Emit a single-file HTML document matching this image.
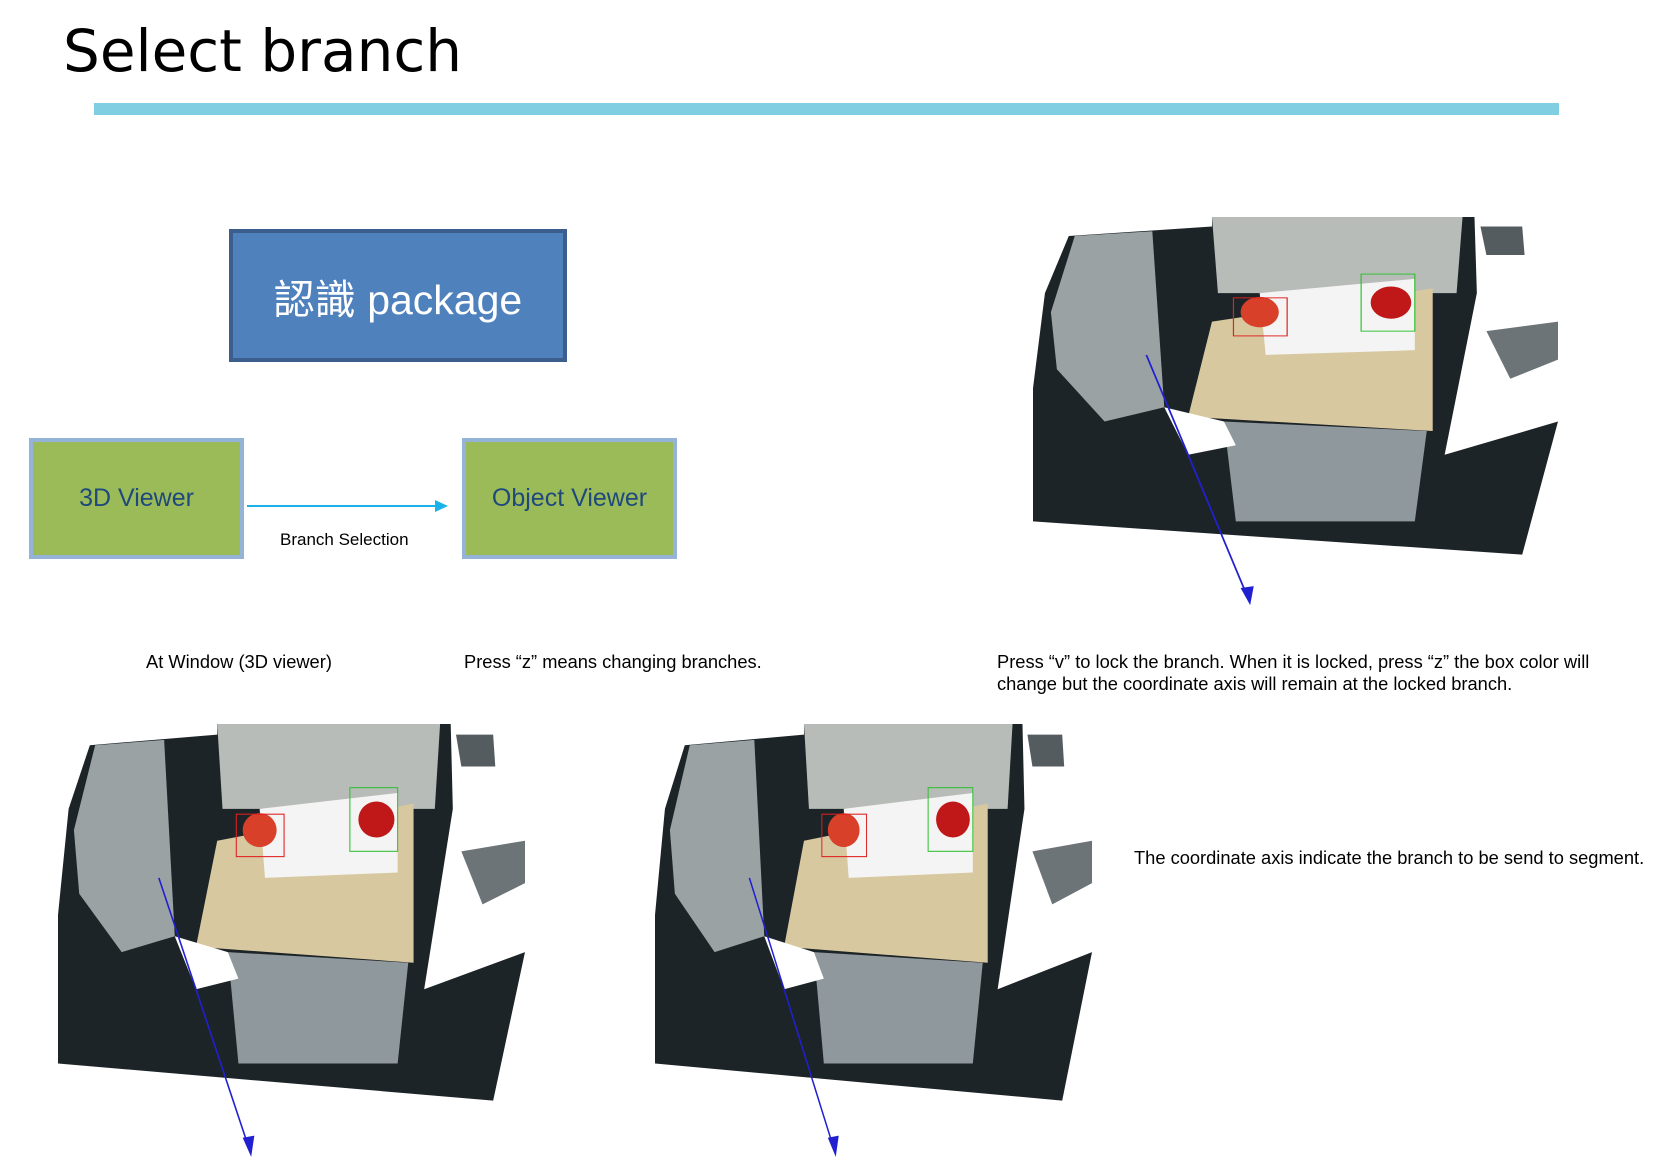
<!DOCTYPE html>
<html><head><meta charset="utf-8"><style>
html,body{margin:0;padding:0;background:#fff}
body{width:1654px;height:1162px;position:relative;overflow:hidden;font-family:"Liberation Sans","Noto Sans CJK TC",sans-serif}
.a{position:absolute}
.t{font-size:18.3px;color:#000;white-space:nowrap;line-height:22px}
</style></head><body>
<div class="a" style="left:63px;top:16px;font-family:'DejaVu Sans',sans-serif;font-size:58px;line-height:70px;color:#000">Select branch</div>
<div class="a" style="left:94px;top:103px;width:1465px;height:12px;background:#7fcee1"></div>

<div class="a" style="left:229px;top:229px;width:330px;height:125px;background:#4f81bd;border:4px solid #3b5e8c;display:flex;align-items:center;justify-content:center;color:#fff;font-size:41px">認識 package</div>

<div class="a" style="left:29px;top:438px;width:207px;height:113px;background:#9bbb59;border:4px solid #95b3d7;display:flex;align-items:center;justify-content:center;color:#1f497d;font-size:25px">3D Viewer</div>
<div class="a" style="left:462px;top:438px;width:207px;height:113px;background:#9bbb59;border:4px solid #95b3d7;display:flex;align-items:center;justify-content:center;color:#1f497d;font-size:25px">Object Viewer</div>
<svg class="a" style="left:245px;top:496px" width="205" height="20"><line x1="2" y1="10" x2="192" y2="10" stroke="#19b3ea" stroke-width="2"/><polygon points="190,4 203,10 190,16" fill="#19b3ea"/></svg>
<div class="a t" style="left:280px;top:529px;font-size:17px">Branch Selection</div>

<div class="a t" style="left:146px;top:651px">At Window (3D viewer)</div>
<div class="a t" style="left:464px;top:651px">Press “z” means changing branches.</div>
<div class="a t" style="left:997px;top:651px">Press “v” to lock the branch. When it is locked, press “z” the box color will<br>change but the coordinate axis will remain at the locked branch.</div>
<div class="a t" style="left:1134px;top:847px">The coordinate axis indicate the branch to be send to segment.</div>

<svg class="a" style="left:1033px;top:217px" width="525" height="390" viewBox="0 0 440 410" preserveAspectRatio="none">
<g id="s">
<polygon points="10,80 30,20 150,10 150,0 370,0 372,80 345,250 440,215 410,355 0,320 0,180" fill="#1d2428"/>
<polygon points="15,100 35,20 100,15 110,200 60,215 20,160" fill="#9aa2a4"/>
<polygon points="150,0 360,0 355,80 155,80" fill="#b8bcb8"/>
<polygon points="375,10 410,10 412,40 380,40" fill="#555c60"/>
<polygon points="380,120 440,110 440,150 400,170" fill="#6c7478"/>
<polygon points="150,110 335,75 335,225 130,210" fill="#d8c8a0"/>
<polygon points="190,80 320,65 320,140 195,145" fill="#f4f4f4"/>
<polygon points="160,215 330,225 320,320 170,320" fill="#8f989c"/>
<polygon points="110,200 160,215 170,240 130,250" fill="#fff"/>
<circle cx="190" cy="100" r="16" fill="#d8402a"/>
<circle cx="300" cy="90" r="17" fill="#c01818"/>
<rect x="168" y="85" width="45" height="40" fill="none" stroke="#e02020"/>
<rect x="275" y="60" width="45" height="60" fill="none" stroke="#30c030"/>
<line x1="95" y1="145" x2="180" y2="400" stroke="#2020d0" stroke-width="1.5"/>
<polygon points="174,390 182,408 185,388" fill="#2020d0"/>
</g></svg>
<svg class="a" style="left:58px;top:724px" width="467" height="435" viewBox="0 0 440 410" preserveAspectRatio="none"><use href="#s"/></svg>
<svg class="a" style="left:655px;top:724px" width="437" height="435" viewBox="0 0 440 410" preserveAspectRatio="none"><use href="#s"/></svg>
</body></html>
